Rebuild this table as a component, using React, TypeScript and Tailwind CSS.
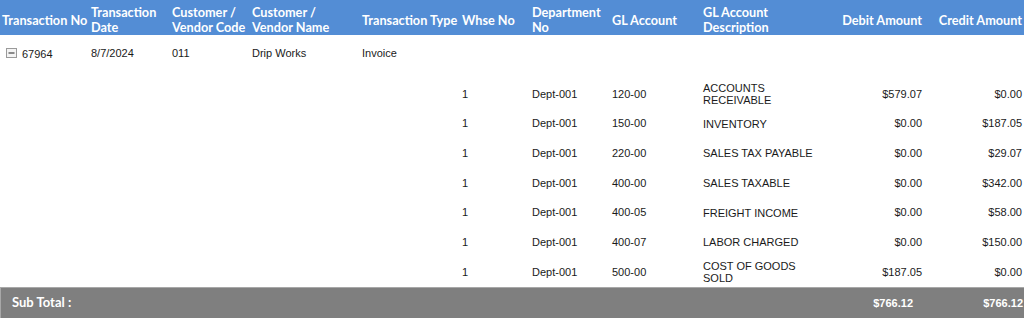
const cols = 'grid grid-cols-[89px_81px_80px_110px_100px_70px_80px_91px_125px_98px_100px]';

const headers = [
  'Transaction No',
  'Transaction\nDate',
  'Customer /\nVendor Code',
  'Customer /\nVendor Name',
  'Transaction Type',
  'Whse No',
  'Department\nNo',
  'GL Account',
  'GL Account\nDescription',
];

const lines = [
  { whse: '1', dept: 'Dept-001', gl: '120-00', desc: 'ACCOUNTS RECEIVABLE', debit: '$579.07', credit: '$0.00' },
  { whse: '1', dept: 'Dept-001', gl: '150-00', desc: 'INVENTORY', debit: '$0.00', credit: '$187.05' },
  { whse: '1', dept: 'Dept-001', gl: '220-00', desc: 'SALES TAX PAYABLE', debit: '$0.00', credit: '$29.07' },
  { whse: '1', dept: 'Dept-001', gl: '400-00', desc: 'SALES TAXABLE', debit: '$0.00', credit: '$342.00' },
  { whse: '1', dept: 'Dept-001', gl: '400-05', desc: 'FREIGHT INCOME', debit: '$0.00', credit: '$58.00' },
  { whse: '1', dept: 'Dept-001', gl: '400-07', desc: 'LABOR CHARGED', debit: '$0.00', credit: '$150.00' },
  { whse: '1', dept: 'Dept-001', gl: '500-00', desc: 'COST OF GOODS SOLD', debit: '$187.05', credit: '$0.00' },
];

const CollapseIcon = () => (
  <svg width="11" height="10" viewBox="0 0 11 10" className="shrink-0">
    <rect x="0.5" y="0.5" width="10" height="9" fill="#f4f4f4" stroke="#9a9a9a" />
    <rect x="2.5" y="4" width="6" height="2" fill="#8a8a8a" />
  </svg>
);

export default function App() {
  return (
    <div className="w-[1024px] h-[318px] overflow-hidden bg-white font-['Liberation_Sans',Arial,sans-serif] text-[11px] text-[#1a1a1a]">
      {/* Header */}
      <div className={`${cols} h-[35px] pt-[5px] items-center bg-[#538dd5] text-white font-['Lato',sans-serif] font-bold text-[12.7px] leading-[15px]`}>
        {headers.map((h) => (
          <div key={h} className="pl-[2px] whitespace-pre">
            {h}
          </div>
        ))}
        <div className="pr-[2px] text-right whitespace-nowrap">Debit Amount</div>
        <div className="pr-[2px] text-right whitespace-nowrap">Credit Amount</div>
      </div>

      {/* Master row */}
      <div className={`${cols} h-[36px] items-center`}>
        <div className="pl-[6px] flex items-center gap-[5px]">
          <CollapseIcon />
          <span className="pt-[2px]">67964</span>
        </div>
        <div className="pl-[2px]">8/7/2024</div>
        <div className="pl-[2px]">011</div>
        <div className="pl-[2px]">Drip Works</div>
        <div className="pl-[2px]">Invoice</div>
      </div>

      {/* Detail rows */}
      <div className="pt-[8px]">
        {lines.map((l) => (
          <div key={l.gl} className={`${cols} h-[29.7px] items-center`}>
            <div className="col-start-6 pl-[2px]">{l.whse}</div>
            <div className="pl-[2px]">{l.dept}</div>
            <div className="pl-[2px]">{l.gl}</div>
            <div className="pl-[2px]">
              <div className="w-[118px] leading-[12px]">{l.desc}</div>
            </div>
            <div className="pr-[2px] text-right">{l.debit}</div>
            <div className="pr-[2px] text-right">{l.credit}</div>
          </div>
        ))}
      </div>

      {/* Sub total */}
      <div className={`${cols} h-[31px] items-center bg-[#7f7f7f] border-t border-l border-[#a8a8a8] text-white`}>
        <div className="col-span-9 pl-[11px] font-['Lato',sans-serif] font-bold text-[13px]">Sub Total :</div>
        <div className="pr-[12px] text-right font-bold">$766.12</div>
        <div className="pr-[2px] text-right font-bold">$766.12</div>
      </div>
    </div>
  );
}
